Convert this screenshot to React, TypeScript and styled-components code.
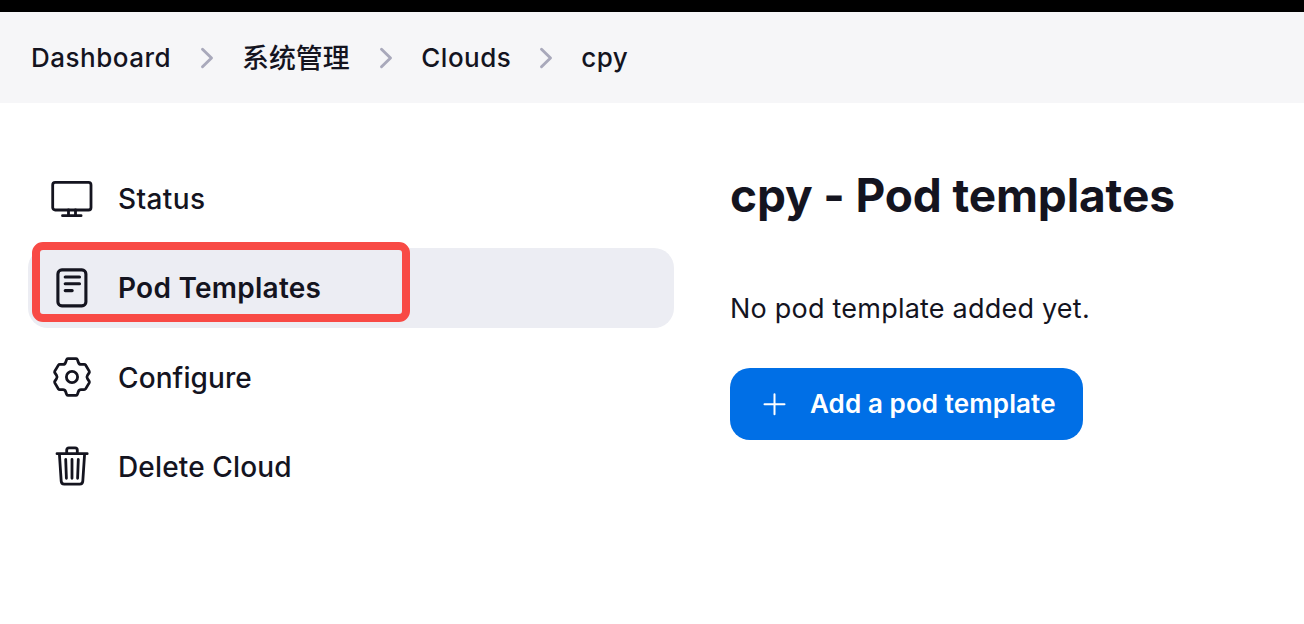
import React from 'react';
import styled, { createGlobalStyle } from 'styled-components';

const Global = createGlobalStyle`
  *{box-sizing:border-box}
  body{margin:0;background:#fff;color:#14141f;font-family:Inter,"Noto Sans CJK SC",sans-serif;overflow:hidden}
`;
const TopBar = styled.div`height:12px;background:#000;`;
const Crumbs = styled.nav`display:flex;align-items:center;height:91px;padding-left:31px;background:#f6f6f8;`;
const Crumb = styled.span<{ $w: number; $size?: number }>`width:${p => p.$w}px;font-size:${p => p.$size ?? 26}px;font-weight:500;line-height:36px;white-space:nowrap;letter-spacing:${p => (p.$size ? 0 : 0.5)}px;`;
const Chevron = styled.svg<{ $before: number; $after: number }>`flex:none;margin:0 ${p => p.$after}px 0 ${p => p.$before}px;`;
const Page = styled.div`display:flex;`;
const Side = styled.aside`position:relative;width:646px;margin:56px 56px 0 28px;display:flex;flex-direction:column;gap:9px;`;
const Item = styled.a<{ $active?: boolean }>`display:flex;align-items:center;gap:24px;height:80px;padding-left:22px;border-radius:20px;
  background:${p => (p.$active ? '#ecedf3' : 'transparent')};font-size:28px;line-height:34px;font-weight:${p => (p.$active ? 600 : 500)};white-space:nowrap;`;
const Label = styled.span<{ $track: number; $drop?: boolean }>`padding-top:${p => (p.$drop ? 2 : 0)}px;letter-spacing:${p => p.$track}px;`;
const Highlight = styled.div`position:absolute;left:4px;top:83px;width:378px;height:80px;border:8px solid #f84a45;border-radius:11px;`;
const Main = styled.main`padding-top:62px;`;
const Title = styled.h1`margin:0;font-size:46px;line-height:60px;font-weight:700;letter-spacing:-.13px;white-space:nowrap;`;
const Note = styled.p`margin:66px 0 0;font-size:27px;line-height:36px;letter-spacing:.22px;white-space:nowrap;`;
const Button = styled.button`display:flex;align-items:center;width:353px;height:72px;margin:41px 0 0;padding:0 0 1px 32px;gap:24px;border:0;border-radius:20px;background:#006fe6;color:#fff;
  font:600 26px Inter,sans-serif;letter-spacing:.1px;white-space:nowrap;`;
const Glyph = styled.svg<{ $stroke?: number }>`flex:none;fill:none;stroke:currentColor;stroke-width:${p => p.$stroke ?? 2.8};stroke-linecap:round;stroke-linejoin:round;`;

const Sep = ({ b, a }: { b: number; a: number }) => (
  <Chevron $before={b} $after={a} width="14" height="22" viewBox="0 0 14 22" fill="none" stroke="#a9a9bb" strokeWidth="2.9" strokeLinecap="round" strokeLinejoin="round"><path d="M2.500 2.200l9 8.800-9 8.800" /></Chevron>
);

export default function App() {
  return (
    <>
      <Global />
      <TopBar />
      <Crumbs>
        <Crumb $w={140}>Dashboard</Crumb><Sep b={29} a={28} />
        <Crumb $w={109} $size={26.9}>系统管理</Crumb><Sep b={28} a={28.3} />
        <Crumb $w={89.7}>Clouds</Crumb><Sep b={28} a={28.3} />
        <Crumb $w={50}>cpy</Crumb>
      </Crumbs>
      <Page>
        <Side>
          <Item>
            <Glyph width="44" height="44" viewBox="0 0 44 44"><rect x="2.7" y="5.400" width="38.300" height="27.600" rx="2.500" /><path d="M12.500 38.700h18.600M18.500 33v5M25.500 33v5" /></Glyph>
            <Label $track={0.4}>Status</Label>
          </Item>
          <Item $active>
            <Glyph $stroke={3.1} width="44" height="44" viewBox="0 0 44 44"><rect x="7.900" y="3.900" width="28" height="36" rx="4" /><path d="M15.200 11h14.300M15.200 17.800h14.300M15.200 24.600h7" /></Glyph>
            <Label $track={0.25}>Pod Templates</Label>
          </Item>
          <Item>
            <Glyph width="44" height="44" viewBox="0 0 44 44">
              <path d="M17.800 3.700h8.400q.9 0 1.200.9l1 2.900q.7 2 2.800 1.900l2.900-.1q1 0 1.500.8l3.600 6q.5.9-.1 1.800l-1.600 2.300q-1.200 1.800 0 3.600l1.600 2.300q.6.9.1 1.800l-3.600 6q-.5.8-1.500.8l-2.900-.1q-2.100-.1-2.800 1.900l-1 2.900q-.3.9-1.200.9h-8.400q-.9 0-1.200-.9l-1-2.900q-.7-2-2.800-1.900l-2.900.1q-1 0-1.500-.8l-3.600-6q-.5-.9.1-1.800l1.600-2.300q1.200-1.800 0-3.600l-1.600-2.300q-.6-.9-.1-1.800l3.600-6q.5-.8 1.500-.8l2.900.1q2.100.1 2.800-1.900l1-2.900q.3-.9 1.200-.9z" />
              <circle cx="22" cy="22" r="5.600" />
            </Glyph>
            <Label $track={0.1} $drop>Configure</Label>
          </Item>
          <Item>
            <Glyph width="44" height="44" viewBox="0 0 44 44"><path d="M7 9.700h30.200M9.400 10l1.800 27.200q.2 2.900 3 2.900h15.600q2.800 0 3-2.900L34.600 10M16.700 9.500V6.100q0-2.200 2.200-2.200h6.200q2.200 0 2.200 2.200v3.400M22 15.500v18.800M15.700 15.500l.7 18.800M28.300 15.500l-.7 18.800" /></Glyph>
            <Label $track={0.15} $drop>Delete Cloud</Label>
          </Item>
          <Highlight />
        </Side>
        <Main>
          <Title>cpy - Pod templates</Title>
          <Note>No pod template added yet.</Note>
          <Button><Glyph $stroke={2} width="24" height="24" viewBox="0 0 24 24"><path d="M12.500 2.200v20M2.500 12.200h20" /></Glyph>Add a pod template</Button>
        </Main>
      </Page>
    </>
  );
}
